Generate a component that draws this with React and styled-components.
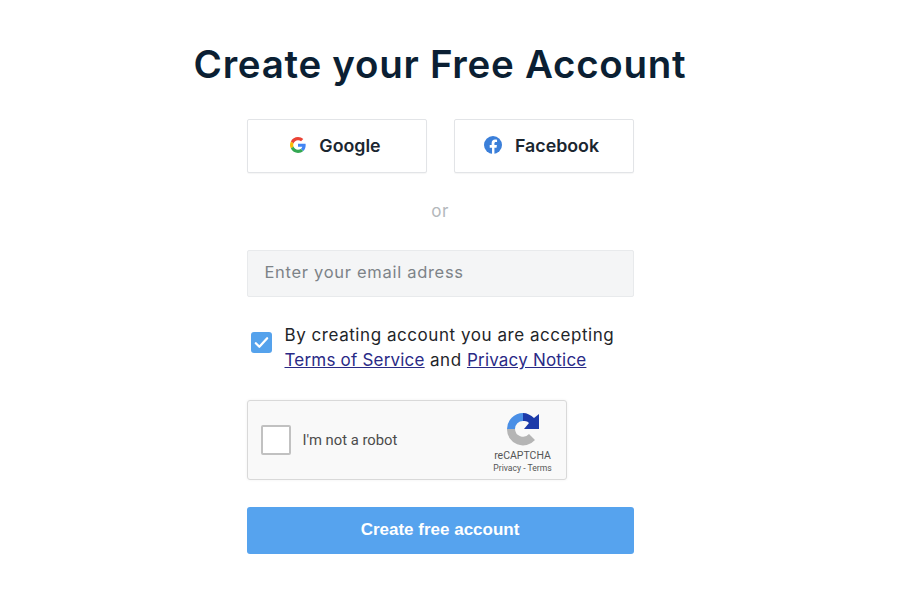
import React from "react";
import styled, { createGlobalStyle } from "styled-components";

const GlobalStyle = createGlobalStyle`
  body {
    margin: 0;
    background: #fff;
    font-family: "Inter", "Liberation Sans", sans-serif;
  }
`;

const Page = styled.div`
  width: 900px;
  height: 609px;
  overflow: hidden;
  display: flex;
  flex-direction: column;
  align-items: center;
  padding: 40px 20px 0 0;
  box-sizing: border-box;
`;

const Title = styled.h1`
  margin: 0;
  font-size: 38.5px;
  line-height: 48px;
  font-weight: 600;
  color: #0b1f33;
  letter-spacing: 0.72px;
  white-space: nowrap;
`;

const Column = styled.div`
  width: 387px;
  margin-top: 31px;
  display: flex;
  flex-direction: column;
`;

const SocialRow = styled.div`
  display: flex;
  justify-content: space-between;
`;

const SocialButton = styled.button`
  width: 180px;
  height: 54px;
  padding: 0 ${(p) => p.$nudge}px 2px 0;
  background: #fff;
  border: 1px solid #e2e4e7;
  border-radius: 2px;
  box-shadow: 0 1px 1px rgba(0, 0, 0, 0.04);
  display: flex;
  align-items: center;
  justify-content: center;
  gap: 13px;
  font-family: inherit;
  font-size: 17.8px;
  font-weight: 600;
  color: #1a2630;
`;

const Or = styled.div`
  margin-top: 28px;
  text-align: center;
  font-size: 17px;
  line-height: 20px;
  letter-spacing: 0.5px;
  color: #b4b8bc;
`;

const EmailInput = styled.input`
  margin-top: 29px;
  height: 47px;
  padding: 0 17px 3px;
  box-sizing: border-box;
  width: 100%;
  background: #f4f5f6;
  border: 1px solid #e8eaec;
  border-radius: 2px;
  font-family: inherit;
  font-size: 16.5px;
  letter-spacing: 0.7px;
  &::placeholder {
    color: #7d8388;
    opacity: 1;
  }
`;

const Terms = styled.div`
  margin-top: 26px;
  display: flex;
  align-items: flex-start;
  gap: 13px;
  padding-left: 4px;
`;

const CheckBox = styled.span`
  width: 21px;
  height: 21px;
  margin-top: 9px;
  flex: none;
  border-radius: 3px;
  background: #55a2ec;
  display: flex;
  align-items: center;
  justify-content: center;
`;

const TermsText = styled.p`
  margin: 0;
  font-size: 17px;
  line-height: 25px;
  letter-spacing: 0.55px;
  color: #1f2529;
  white-space: nowrap;
`;

const TermsLink = styled.a`
  color: #2a2a86;
  letter-spacing: 0.2px;
  text-decoration: underline;
`;

const Captcha = styled.div`
  margin-top: 27px;
  width: 320px;
  height: 80px;
  box-sizing: border-box;
  display: flex;
  align-items: center;
  padding: 0 12px 0 13px;
  background: #f9f9f9;
  border: 1px solid #d9d9d9;
  border-radius: 3px;
  box-shadow: 0 0 3px rgba(0, 0, 0, 0.06);
  font-family: "Roboto", "Liberation Sans", sans-serif;
`;

const CaptchaBox = styled.span`
  width: 30px;
  height: 30px;
  box-sizing: border-box;
  flex: none;
  background: #fff;
  border: 2px solid #c1c1c1;
  border-radius: 2px;
`;

const CaptchaLabel = styled.span`
  margin-left: 12px;
  flex: 1;
  font-size: 14.8px;
  color: #4c4c4c;
`;

const CaptchaBrand = styled.div`
  width: 62px;
  margin-top: 6px;
  display: flex;
  flex-direction: column;
  align-items: center;
  color: #555;
`;

const BrandName = styled.span`
  margin-top: 3px;
  font-size: 10.5px;
  line-height: 13px;
`;

const BrandLinks = styled.span`
  font-size: 8.6px;
  line-height: 13px;
  white-space: nowrap;
`;

const Submit = styled.button`
  margin-top: 27px;
  height: 47px;
  width: 100%;
  padding: 0 0 2px;
  border: 0;
  border-radius: 3px;
  background: #56a3ee;
  color: #fff;
  font-family: "Liberation Sans", sans-serif;
  font-size: 17px;
  font-weight: 700;
`;

const GoogleIcon = () => (
  <svg width="16" height="16" viewBox="0 0 48 48">
    <path fill="#EA4335" d="M24 9.500c3.500 0 6.700 1.300 9.100 3.500l6.800-6.800C35.800 2.400 30.300 0 24 0 14.600 0 6.500 5.400 2.600 13.200l7.900 6.100C12.400 13.600 17.700 9.500 24 9.500z" />
    <path fill="#4285F4" d="M47 24.500c0-1.600-.1-3.100-.4-4.500H24v9h12.900c-.6 3-2.200 5.500-4.700 7.200l7.700 6c4.500-4.200 7.100-10.300 7.100-17.700z" />
    <path fill="#FBBC05" d="M10.500 28.700c-.5-1.500-.8-3-.8-4.700s.3-3.200.8-4.700l-7.900-6.100C1 16.500 0 20.100 0 24s1 7.500 2.600 10.800l7.900-6.100z" />
    <path fill="#34A853" d="M24 48c6.500 0 11.900-2.100 15.900-5.800l-7.700-6c-2.100 1.400-4.900 2.300-8.200 2.300-6.300 0-11.600-4.100-13.500-9.800l-7.900 6.100C6.500 42.600 14.600 48 24 48z" />
  </svg>
);

const FacebookIcon = () => (
  <svg width="18" height="18" viewBox="0 0 24 24">
    <circle cx="12" cy="12" r="12" fill="#3b7fd9" />
    <path fill="#fff" d="M16.700 15.500l.5-3.500h-3.300V9.800c0-1 .5-1.900 2-1.900h1.500v-3s-1.400-.2-2.700-.2c-2.700 0-4.500 1.700-4.500 4.600V12H7.600v3.500h3.100V24h3.200v-8.500z" />
  </svg>
);

const CheckMark = () => (
  <svg width="17" height="17" viewBox="0 0 24 24" fill="none" stroke="#fff" strokeWidth="3.2" strokeLinecap="round" strokeLinejoin="round">
    <path d="M4 13l5 5L20 6" />
  </svg>
);

const RecaptchaLogo = () => (
  <svg width="34" height="34" viewBox="0 0 34 34">
    <path fill="#b5b5b5" d="M1 17h8a8 8 0 0 0 14 5l6 6A16 16 0 0 1 1 17z" />
    <path fill="#4a8fe6" d="M17 1A16 16 0 0 0 1 17h8a8 8 0 0 1 8-8z" />
    <path fill="#1c3aa9" d="M17 1c4 0 8 2 11 5l5-4v15H18l5-6c-2-2-4-2-6-2z" />
  </svg>
);

export default function App() {
  return (
    <Page>
      <GlobalStyle />
      <Title>Create your Free Account</Title>
      <Column>
        <SocialRow>
          <SocialButton type="button" $nudge={2}>
            <GoogleIcon />
            Google
          </SocialButton>
          <SocialButton type="button" $nudge={4}>
            <FacebookIcon />
            Facebook
          </SocialButton>
        </SocialRow>
        <Or>or</Or>
        <EmailInput placeholder="Enter your email adress" />
        <Terms>
          <CheckBox>
            <CheckMark />
          </CheckBox>
          <TermsText>
            By creating account you are accepting
            <br />
            <TermsLink href="#">Terms of Service</TermsLink> and{" "}
            <TermsLink href="#">Privacy Notice</TermsLink>
          </TermsText>
        </Terms>
        <Captcha>
          <CaptchaBox />
          <CaptchaLabel>I'm not a robot</CaptchaLabel>
          <CaptchaBrand>
            <RecaptchaLogo />
            <BrandName>reCAPTCHA</BrandName>
            <BrandLinks>Privacy - Terms</BrandLinks>
          </CaptchaBrand>
        </Captcha>
        <Submit type="button">Create free account</Submit>
      </Column>
    </Page>
  );
}
